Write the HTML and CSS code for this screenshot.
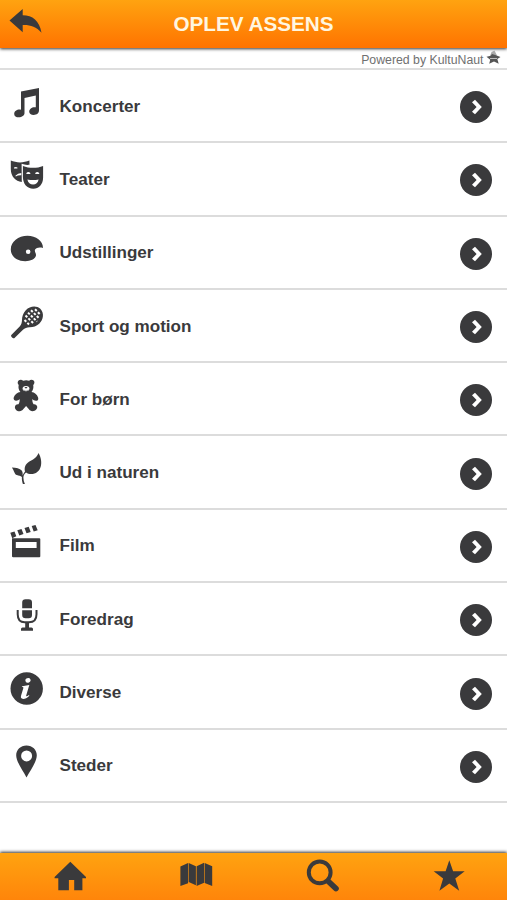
FILE: index.html
```html
<!DOCTYPE html>
<html lang="da">
<head>
<meta charset="utf-8">
<title>Oplev Assens</title>
<link rel="stylesheet" href="styles.css">
</head>
<body>
<svg class="defs" aria-hidden="true">
  <symbol id="go" viewBox="0 0 32 32"><circle cx="16" cy="16" r="16"/><path fill="#fff" d="M12 11.200 15 8.800 21.800 16 15 23.200l-3-2.400 4.600-4.800z"/></symbol>
</svg>
<div class="app">
  <header class="header">
    <a class="back"><svg width="34" height="26" viewBox="0 0 34 26"><path d="M.5 11.500 13.700 0v6.200C23.500 6.200 30.500 11.500 32.500 23.800 27 17.300 21 15.700 13.700 16v7.300z"/></svg></a>
    <h1>OPLEV ASSENS</h1>
  </header>
  <div class="powered"><span>Powered by KultuNaut</span>
    <svg width="15" height="15" viewBox="0 0 15 15"><path fill="#aaa" d="M4 6 5.500 2 8.500.5 11 5.500z"/><path fill="#555" d="m6 4 4 1.300 4.500 1.600-3.200 2.200 1.400 4.700-4.700-2.300-4.800 2.200 1-4L.5 6.800l4.300-1z"/><path stroke="#bbb" d="M4 8.500h7"/></svg>
  </div>
  <main class="list">
    <a class="row"><svg class="icon" viewBox="0 0 34 34"><path d="M11 5.500 29 2v22.300c0 2.800-2.200 4.700-5.300 4.700-2.700 0-4.500-1.400-4.500-3.500 0-2.900 3.500-5 6.600-4.200V9.500L14.500 12v15c0 2.600-2.600 4.300-5.600 4.300-2.800 0-4.700-1.300-4.700-3.400 0-2.900 3.600-4.900 6.800-4.100z"/></svg><span>Koncerter</span><svg class="go"><use href="#go"/></svg></a>
    <a class="row"><svg class="icon" viewBox="0 0 34 34"><path d="M.8 1.600C6 4 14 4 19.400 1.600l.1 4.200c-2.700.3-5.600 0-7.900-1l.2 18.100C5.500 22.500.8 17.500.8 10z"/><path fill="#fff" d="M4 8.600q1.800-1.400 3.400 0v1H4zM5.400 16.800q2.500-2.600 5.900-2.800v2.300Q8 16 5.800 17.400z"/><path d="M12.900 6.900c6.300 2.500 14 2.500 20.200 0v11.500c0 6.800-4.300 11.300-9.800 11.300-6.200 0-10.400-4.900-10.400-12z"/><path fill="#fff" d="M16.400 14.100q1.900-2 3.900 0v1h-3.900zm8.900 0q1.900-2 3.900 0v1h-3.900zM17.400 20.400q5.600 1.300 11.200 0c-.6 3.500-2.800 5.100-5.500 5.100-2.900 0-5.100-1.900-5.700-5.100"/></svg><span>Teater</span><svg class="go"><use href="#go"/></svg></a>
    <a class="row"><svg class="icon" viewBox="0 0 34 34"><path fill-rule="evenodd" d="M17.500 3.800c8.500 0 15.500 5.200 15.500 12.100-3.200-.9-6.800-.5-7.900 1.700-1 2.200 1.400 3.500.8 6.200-.8 3.500-5.500 5.400-10.600 5.400C6.800 29.200.8 24.300.8 17.500.8 9.700 8.300 3.800 17.500 3.800m.6 13.600a2.300 2.300 0 1 0 .1 4.600 2.300 2.300 0 0 0-.1-4.600"/></svg><span>Udstillinger</span><svg class="go"><use href="#go"/></svg></a>
    <a class="row"><svg class="icon" viewBox="0 0 34 34"><path d="M30.300 2.800c4.100 4.100 3.300 10.800-1.100 15-2.800 2.700-6.400 3.500-10 3.400-2.200 0-4.600.9-6.200 2.500L4.500 32c-1.200 1.100-4.300-1.800-3.200-3.100l8.400-8.500c1.700-1.700 2.200-3.900 2.300-6.300 0-3.500 1.100-7 3.800-9.900 4.100-4.300 10.700-5 14.500-1.400"/><g fill="none" stroke="#fff" stroke-width="2" stroke-dasharray="2.500 1.600"><path d="m15.500 9.500 8.400 8.400M18 6.600l9 9M21 4.200l8.600 8.600M25 3.300l5.200 5.200M14.500 14l4.500 4.500"/></g></svg><span>Sport og motion</span><svg class="go"><use href="#go"/></svg></a>
    <a class="row"><svg class="icon" viewBox="0 0 34 34"><path d="M8.900 1.200c1.500-1 3.200-.6 4.200.6q3.200-1.200 6 0c1.300-1.500 3.300-1.500 4.500-.2 1.300 1.400 1 3.300-.4 4.400.6 2.900-.1 5-1.700 7 3 .3 5.500 2.300 6.600 5.400.7 2.200-.5 3.500-2.300 3.400-1.300 0-2.600-.7-3.400-1.700-.2 2 .1 3.900 1.200 5.100 1.400-.3 3 .4 3.500 2.100.7 2.400-1.500 4.900-4.600 4.900-3.300 0-4.600-3.600-6.400-5.100-1.800 1.500-3.200 5.100-6.500 5.100-3 0-5.200-2.400-4.600-4.800.4-1.700 2-2.500 3.500-2.200 1-1.400 1.300-3.200 1.100-5.100-.8 1.100-2.100 1.700-3.400 1.700-1.800 0-3.100-1.300-2.400-3.500 1.100-3 3.500-5 6.600-5.300-1.700-1.900-2.300-4.200-1.700-7-1.500-1.400-1.300-3.700.2-4.800"/><ellipse cx="16" cy="9.600" rx="3.400" ry="2.600" fill="#fff"/><path d="M14.400 8h3.200L16 9.800zM13.500 10.500q2.500 1.700 5 0l-.5 1.100h-4z"/></svg><span>For børn</span><svg class="go"><use href="#go"/></svg></a>
    <a class="row"><svg class="icon" viewBox="0 0 34 34"><path d="M28.500.9c5.500 9.300 2.700 21.100-7.400 21.100-2 0-3.600-.5-5-1.500-1.800 1.300-2.600 3-2.700 5.100q0 3.500 1.500 6.500h-2c-.8-2.200-1.200-4.600-1-7-1.400-1.200-3.200-1.200-5-2-2.700-1.200-2.700-4.700-5-7.700 4.300.3 8 .7 9.800 3.200 1.200 1.800 1 3.400.9 5 .5-1.700 1.400-3 2.400-4.200-1-3.800.4-7.300 4-9.700 3.600-2.300 7.600-3.300 9.500-8.800"/></svg><span>Ud i naturen</span><svg class="go"><use href="#go"/></svg></a>
    <a class="row"><svg class="icon" viewBox="0 0 34 34"><path fill-rule="evenodd" d="M2 13.300h27.300q1 0 1 1v17q0 1-1 1H3.200q-1.200 0-1.200-1zm3.800 3.700v6.100h20.800V17z"/><path d="m.3 7.700 4.200-1.300 1.800 4.800-4.100 2zM7.300 5.300l4.200-1.300 2 5.100-4.200 1.400zm7.200-2.200 4.200-1.300 2 5.100-4.200 1.400zm7.200-2.200L25.500-.1l2.200 5.300-4 1.200z"/></svg><span>Film</span><svg class="go"><use href="#go"/></svg></a>
    <a class="row"><svg class="icon" viewBox="0 0 34 34"><path d="M12.200 9.200V3.500Q12.200.2 15.500.2h3.200Q22 .2 22 3.500v5.700zm0 2.100H22V16q0 3.300-3.300 3.300h-3.200q-3.300 0-3.300-3.300z"/><path fill="none" stroke="#3a3a3c" stroke-width="2" d="M7.700 11v4.300q0 8 7 8H19q7.500 0 7.500-8V11"/><path d="M15.200 23.500H19v5h2.500q1.500 0 1.500 1.500v1.700H11V30q0-1.500 1.500-1.500h2.700z"/></svg><span>Foredrag</span><svg class="go"><use href="#go"/></svg></a>
    <a class="row"><svg class="icon" viewBox="0 0 34 34"><circle cx="16.700" cy="16.500" r="16.200"/><g fill="#fff"><ellipse cx="18" cy="8.400" rx="2.600" ry="2.300" transform="rotate(-25 18 8.400)"/><path d="M12.200 14.200 19.300 13l-3.100 10.500c-.3 1.200.5 1.200 2.600-.6l.6.8c-2.400 2.500-4.300 3.200-6.200 3.200-2 0-2.800-1.200-2.100-3.300l2.200-7.300c.3-1.100-.1-1.200-1.500-1.200z"/></g></svg><span>Diverse</span><svg class="go"><use href="#go"/></svg></a>
    <a class="row"><svg class="icon" viewBox="0 0 34 34"><path fill-rule="evenodd" d="M16.500.5c5.900 0 10.300 4.400 10.300 9.800 0 6.500-6.200 14.500-10.300 22.200C12.600 24.800 6.200 16.800 6.200 10.300 6.200 4.900 10.600.5 16.500.5m.1 4.900a5.500 5.500 0 1 0 0 11 5.500 5.500 0 0 0 0-11"/></svg><span>Steder</span><svg class="go"><use href="#go"/></svg></a>
  </main>
  <nav class="tabs">
    <a><svg viewBox="0 0 34 34"><path d="M17.300 2.800 33 17.900v1.300h-3.600v12.100h-8.200V21h-5.300v10.300H5.300V19.200H1.600v-1.300z"/></svg></a>
    <a><svg viewBox="0 0 34 34"><path d="m.4 7.500 7.700-3.600v20.300L.4 26.900zm8.300-3.600 7.200 3.400v18.900L8.700 23zM16.600 7.300l7.500-3.600v20l-7.500 3.400zm8.100-3.400 7.500 3.300v19.700l-7.500-2.800z"/></svg></a>
    <a><svg viewBox="0 0 34 34"><circle cx="13.700" cy="13.400" r="10.900" fill="none" stroke="#3a3a3c" stroke-width="4"/><path stroke="#3a3a3c" stroke-width="5.800" stroke-linecap="round" d="m23 23 6.900 6.500"/></svg></a>
    <a><svg viewBox="0 0 34 34"><path d="m16.300 1.200 3.800 11H31.700l-9.400 7.400 3.900 12.200-9.900-7.400-9.900 7.400 3.700-12.200L.7 12.200h11.900z"/></svg></a>
  </nav>
</div>
</body>
</html>
```
FILE: styles.css
```css
* { box-sizing: border-box; }
body {
  margin: 0;
  background: #fff;
  color: #3a3a3c;
  font-family: "Liberation Sans", Arial, sans-serif;
}
svg { display: block; fill: #3a3a3c; flex: none; }
.defs { display: none; }
.app { height: 900px; display: flex; flex-direction: column; overflow: hidden; }

.header {
  flex: none;
  height: 48px;
  display: grid;
  grid-template-columns: 60px 1fr 60px;
  background: linear-gradient(#ffa310, #ff7300);
  box-shadow: 0 1px 3px rgba(0, 0, 0, .8);
}
.back { padding: 9px 0 0 9px; }
.header h1 {
  margin: 0;
  color: #fff6e0;
  font-size: 20.700px;
  line-height: 47px;
  text-align: center;
  white-space: nowrap;
}

.powered {
  flex: none;
  height: 22px;
  padding: 1px 6px 0 0;
  display: flex;
  justify-content: flex-end;
  gap: 2.500px;
  border-bottom: 2px solid #dedede;
  color: #707070;
  font-size: 12.300px;
  line-height: 22px;
}
.powered svg { margin-top: 1px; }

.list { flex: 1; }
.row {
  height: 73.3px;
  padding: 0 15px 0 10px;
  display: flex;
  align-items: center;
  border-bottom: 2px solid #dcdcdc;
  font-size: 17.100px;
  font-weight: bold;
}
.row span { flex: 1; padding: 2px 0 0 15.500px; }
.icon { width: 34px; height: 34px; margin-top: -6px; overflow: visible; }
.go { width: 32px; height: 32px; margin-top: 3px; }

.tabs {
  flex: none;
  height: 47px;
  padding: 6px 0 0 14px;
  display: grid;
  grid-template-columns: repeat(4, 126.500px);
  justify-items: center;
  background: linear-gradient(#ffa310, #ff850a);
  box-shadow: 0 -1px 3px rgba(0, 0, 0, .8);
}
.tabs a { padding-right: 14px; }
.tabs svg { width: 34px; height: 34px; }
```
